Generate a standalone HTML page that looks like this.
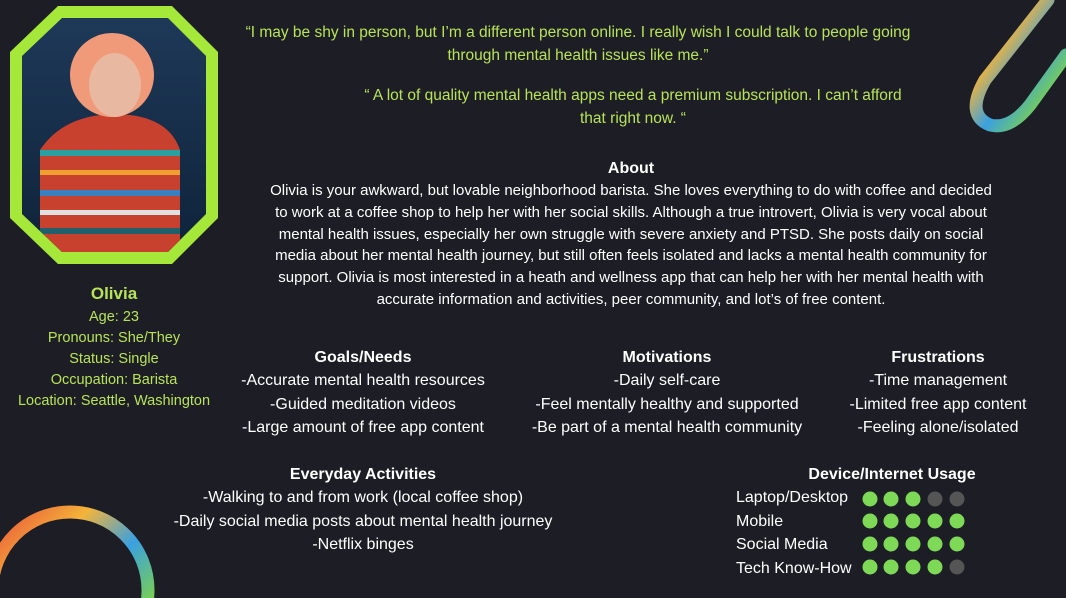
<!DOCTYPE html>
<html><head><meta charset="utf-8"><style>
html,body{margin:0;width:1066px;height:598px;overflow:hidden}
body{background:#1c1d25;font-family:"Liberation Sans",sans-serif;position:relative;color:#fff}
.a{position:absolute;text-align:center;white-space:nowrap}
.g{color:#b8e357}
.h{font-weight:bold;font-size:16px}
.t{font-size:16px;line-height:23.5px}
</style></head><body>
<svg class="a" style="left:0;top:0" width="1066" height="598">
<defs>
<linearGradient id="r" x1="0" y1="0" x2="1" y2="1"><stop offset="0" stop-color="#e84a3a"/><stop offset=".3" stop-color="#f4b43a"/><stop offset=".55" stop-color="#3aa0e0"/><stop offset=".8" stop-color="#7ad050"/><stop offset="1" stop-color="#d040a0"/></linearGradient>
<linearGradient id="bg" x1="0" y1="0" x2="0" y2="1"><stop offset="0" stop-color="#1f3a5a"/><stop offset="1" stop-color="#0e2238"/></linearGradient>
<clipPath id="oc"><polygon points="62,18 168,18 206,56 206,214 168,252 62,252 22,214 22,56"/></clipPath>
</defs>
<polygon points="58,6 172,6 218,52 218,218 172,264 58,264 10,218 10,52" fill="#a6e83a"/>
<g clip-path="url(#oc)">
<rect x="0" y="0" width="230" height="270" fill="url(#bg)"/>
<path d="M40 260 L40 150 Q60 120 100 115 L130 115 Q170 120 180 150 L180 260Z" fill="#c8402e"/>
<rect x="40" y="150" width="140" height="6" fill="#2aa0a0"/><rect x="40" y="170" width="140" height="5" fill="#f0a030"/><rect x="40" y="190" width="140" height="6" fill="#3a80c0"/><rect x="40" y="210" width="140" height="5" fill="#e0e0e0"/><rect x="40" y="228" width="140" height="6" fill="#20606a"/>
<ellipse cx="112" cy="75" rx="42" ry="42" fill="#f09a7a"/>
<ellipse cx="115" cy="85" rx="26" ry="32" fill="#e8b8a0"/>
</g>
<path d="M1048 0 L985 80 Q965 115 990 125 Q1010 130 1030 105 L1066 55" fill="none" stroke="url(#r)" stroke-width="13" stroke-linecap="round"/>
<circle cx="70" cy="590" r="78" fill="none" stroke="url(#r)" stroke-width="13"/>
<g fill="#7ed957">
<circle cx="870" cy="499" r="7.5"/><circle cx="891" cy="499" r="7.5"/><circle cx="913" cy="499" r="7.5"/>
<circle cx="870" cy="521" r="7.5"/><circle cx="891" cy="521" r="7.5"/><circle cx="913" cy="521" r="7.5"/><circle cx="935" cy="521" r="7.5"/><circle cx="957" cy="521" r="7.5"/>
<circle cx="870" cy="544" r="7.5"/><circle cx="891" cy="544" r="7.5"/><circle cx="913" cy="544" r="7.5"/><circle cx="935" cy="544" r="7.5"/><circle cx="957" cy="544" r="7.5"/>
<circle cx="870" cy="567" r="7.5"/><circle cx="891" cy="567" r="7.5"/><circle cx="913" cy="567" r="7.5"/><circle cx="935" cy="567" r="7.5"/>
</g>
<g fill="#555"><circle cx="935" cy="499" r="7.5"/><circle cx="957" cy="499" r="7.5"/><circle cx="957" cy="567" r="7.5"/></g>
</svg>

<div class="a g" style="left:0;width:228px;top:284px;font-size:17px;font-weight:bold">Olivia</div>
<div class="a g" style="left:0;width:228px;top:307px;font-size:14.5px;line-height:21px">Age: 23<br>Pronouns: She/They<br>Status: Single<br>Occupation: Barista<br>Location: Seattle, Washington</div>

<div class="a g" style="left:198px;width:760px;top:21px;font-size:15.5px;line-height:23px">“I may be shy in person, but I’m a different person online. I really wish I could talk to people going<br>through mental health issues like me.”</div>
<div class="a g" style="left:253px;width:760px;top:84px;font-size:15.5px;line-height:23px">“ A lot of quality mental health apps need a premium subscription. I can’t afford<br>that right now. “</div>

<div class="a h" style="left:531px;width:200px;top:160px">About</div>
<div class="a" style="left:231px;width:800px;top:180px;font-size:15px;line-height:21.8px">Olivia is your awkward, but lovable neighborhood barista. She loves everything to do with coffee and decided<br>to work at a coffee shop to help her with her social skills. Although a true introvert, Olivia is very vocal about<br>mental health issues, especially her own struggle with severe anxiety and PTSD. She posts daily on social<br>media about her mental health journey, but still often feels isolated and lacks a mental health community for<br>support. Olivia is most interested in a heath and wellness app that can help her with her mental health with<br>accurate information and activities, peer community, and lot’s of free content.</div>

<div class="a h" style="left:213px;width:300px;top:349px">Goals/Needs</div>
<div class="a t" style="left:213px;width:300px;top:369px">-Accurate mental health resources<br>-Guided meditation videos<br>-Large amount of free app content</div>
<div class="a h" style="left:517px;width:300px;top:349px">Motivations</div>
<div class="a t" style="left:517px;width:300px;top:369px">-Daily self-care<br>-Feel mentally healthy and supported<br>-Be part of a mental health community</div>
<div class="a h" style="left:788px;width:300px;top:349px">Frustrations</div>
<div class="a t" style="left:788px;width:300px;top:369px">-Time management<br>-Limited free app content<br>-Feeling alone/isolated</div>

<div class="a h" style="left:213px;width:300px;top:466px">Everyday Activities</div>
<div class="a t" style="left:113px;width:500px;top:486px">-Walking to and from work (local coffee shop)<br>-Daily social media posts about mental health journey<br>-Netflix binges</div>

<div class="a h" style="left:742px;width:300px;top:466px">Device/Internet Usage</div>
<div class="a t" style="left:736px;top:486px;text-align:left">Laptop/Desktop<br>Mobile<br>Social Media<br>Tech Know-How</div>
</body></html>
